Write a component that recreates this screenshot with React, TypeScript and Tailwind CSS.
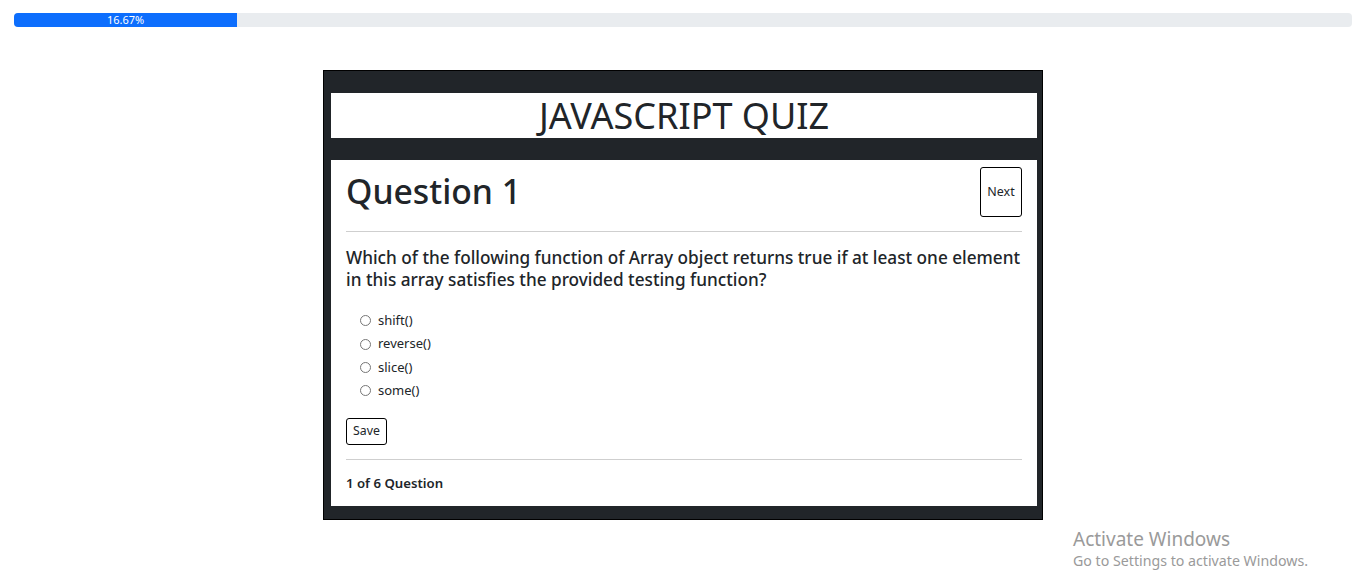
const OPTIONS = ["shift()", "reverse()", "slice()", "some()"];

export default function App() {
  const percent = 16.67;

  return (
    <div className="relative min-h-[580px] bg-white text-[#212529] font-['Segoe_UI','Noto_Sans',sans-serif]">
      <div className="px-[14px] pt-[13px]">
        <div className="h-[14px] w-full rounded-[4px] bg-[#e9ecef] overflow-hidden flex">
          <div
            className="h-full bg-[#0d6efd] text-white text-[11px] leading-[14px] text-center"
            style={{ width: percent + "%" }}
          >
            {percent + "%"}
          </div>
        </div>
      </div>

      <div className="mx-auto mt-[43px] w-[720px] border border-black bg-[#212529] pl-[7px] pr-[5px] pt-[22px] pb-[13px]">
        <div className="h-[45px] bg-white flex items-center justify-center">
          <h2 className="text-[36px] leading-none font-normal">JAVASCRIPT QUIZ</h2>
        </div>

        <div className="mt-[22px] bg-white px-[15px] pt-[7px] pb-[13px]">
          <div className="flex items-start justify-between">
            <h1 className="mt-[4px] text-[33.7px] leading-[40px] font-medium">Question 1</h1>
            <button className="w-[42px] h-[50px] border border-black rounded-[3px] text-[12.5px] bg-white">
              Next
            </button>
          </div>
          <hr className="mt-[14px] border-0 border-t border-[#cfcfcf]" />
          <p className="mt-[15px] text-[17.2px] leading-[22px] font-medium">
            Which of the following function of Array object returns true if at least one element
            in this array satisfies the provided testing function?
          </p>
          <div className="mt-[18px] flex flex-col pl-[14px]">
            {OPTIONS.map((opt) => (
              <label key={opt} className="h-[23.4px] flex items-center gap-[7px] text-[13px]">
                <span className="w-[11px] h-[11px] rounded-full border border-[#767676] bg-white" />
                <span>{opt}</span>
              </label>
            ))}
          </div>
          <button className="mt-[15px] h-[27px] px-[6px] border border-black rounded-[3px] text-[12.3px] bg-white">
            Save
          </button>
          <hr className="mt-[14px] border-0 border-t border-[#cfcfcf]" />
          <div className="mt-[13px] text-[13.2px] leading-[20px] font-semibold">1 of 6 Question</div>
        </div>
      </div>

      <div className="absolute left-[1073px] top-[527px] text-[#9a9a9a]">
        <div className="text-[19px] leading-[24px]">Activate Windows</div>
        <div className="text-[14.2px] leading-[20px]">Go to Settings to activate Windows.</div>
      </div>
    </div>
  );
}
